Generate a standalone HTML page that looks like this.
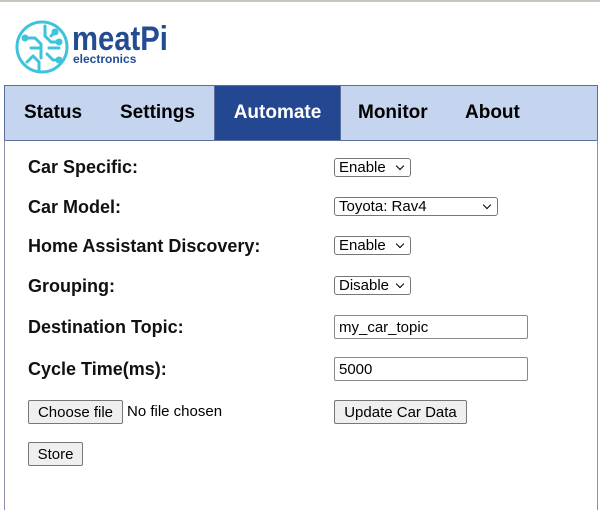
<!DOCTYPE html>
<html><head><style>
body{margin:0;width:600px;height:500px;background:#fff;font-family:"Liberation Sans",Arial,sans-serif;position:relative;overflow:hidden}
.a{position:absolute}
.top{left:0;top:0;width:600px;height:2px;background:#c8c8c0}
.nav{left:4px;top:85px;width:592px;height:54px;background:#c5d5f0;border:1px solid #5a6f9c}
.tab{top:0;height:54px;line-height:54px;font-weight:bold;font-size:19px;color:#000}
.act{background:#234790;color:#fff;left:209px;width:125px;text-align:center;border-left:1px solid #5a6f9c;border-right:1px solid #5a6f9c}
.box{left:4px;top:140px;width:592px;height:370px;border-left:1px solid #8890a8;border-right:1px solid #8890a8}
.lbl{left:28px;font-weight:bold;font-size:18px;color:#111}
.sel{left:334px;height:19px;border:1px solid #777;border-radius:3px;font-size:15px;line-height:18px;padding-left:4px;box-sizing:border-box;background:#fff}
.sel:after{content:"";position:absolute;right:7px;top:4px;width:5px;height:5px;border-right:1.5px solid #000;border-bottom:1.5px solid #000;transform:rotate(45deg)}
.inp{left:334px;height:24px;border:1px solid #888;border-radius:2px;font-size:15px;line-height:24px;padding-left:4px;box-sizing:border-box;width:194px}
.btn{height:24px;border:1px solid #777;border-radius:2px;background:#efefef;font-size:15px;line-height:23px;text-align:center;box-sizing:border-box}
</style></head><body>
<div class="a top"></div>
<svg class="a" style="left:13px;top:18px" width="58" height="58" viewBox="0 0 58 58" fill="none" stroke="#3ec3dc" stroke-width="3" stroke-linecap="round">
<circle cx="29" cy="29" r="25"/>
<path d="M12 20h10l6 6v14M18 30h8M20 38l6 6v8M32 8v10l6 6h8M36 30h10M34 36l6 6h6M38 18l4-4M14 44l6-6"/>
<circle cx="42" cy="14" r="2"/><circle cx="46" cy="24" r="2"/><circle cx="46" cy="42" r="2"/><circle cx="12" cy="20" r="2"/>
</svg>
<div class="a" style="left:72px;top:22px;font-weight:bold;font-size:34px;color:#234c93;line-height:34px;transform:scaleX(0.86);transform-origin:left">meatPi</div>
<div class="a" style="left:73px;top:53px;font-weight:bold;font-size:12px;color:#234c93;line-height:13px">electronics</div>
<div class="a nav">
<div class="a tab" style="left:19px">Status</div>
<div class="a tab" style="left:115px">Settings</div>
<div class="a tab act">Automate</div>
<div class="a tab" style="left:353px">Monitor</div>
<div class="a tab" style="left:460px">About</div>
</div>
<div class="a box"></div>
<div class="a lbl" style="top:157px">Car Specific:</div>
<div class="a lbl" style="top:197px">Car Model:</div>
<div class="a lbl" style="top:236px">Home Assistant Discovery:</div>
<div class="a lbl" style="top:276px">Grouping:</div>
<div class="a lbl" style="top:317px">Destination Topic:</div>
<div class="a lbl" style="top:359px">Cycle Time(ms):</div>
<div class="a sel" style="top:158px;width:77px">Enable</div>
<div class="a sel" style="top:197px;width:164px">Toyota: Rav4</div>
<div class="a sel" style="top:236px;width:77px">Enable</div>
<div class="a sel" style="top:276px;width:77px">Disable</div>
<div class="a inp" style="top:315px">my_car_topic</div>
<div class="a inp" style="top:357px">5000</div>
<div class="a btn" style="left:28px;top:400px;width:95px">Choose file</div>
<div class="a" style="left:127px;top:403px;font-size:15px">No file chosen</div>
<div class="a btn" style="left:334px;top:400px;width:133px">Update Car Data</div>
<div class="a btn" style="left:28px;top:442px;width:55px">Store</div>
</body></html>
